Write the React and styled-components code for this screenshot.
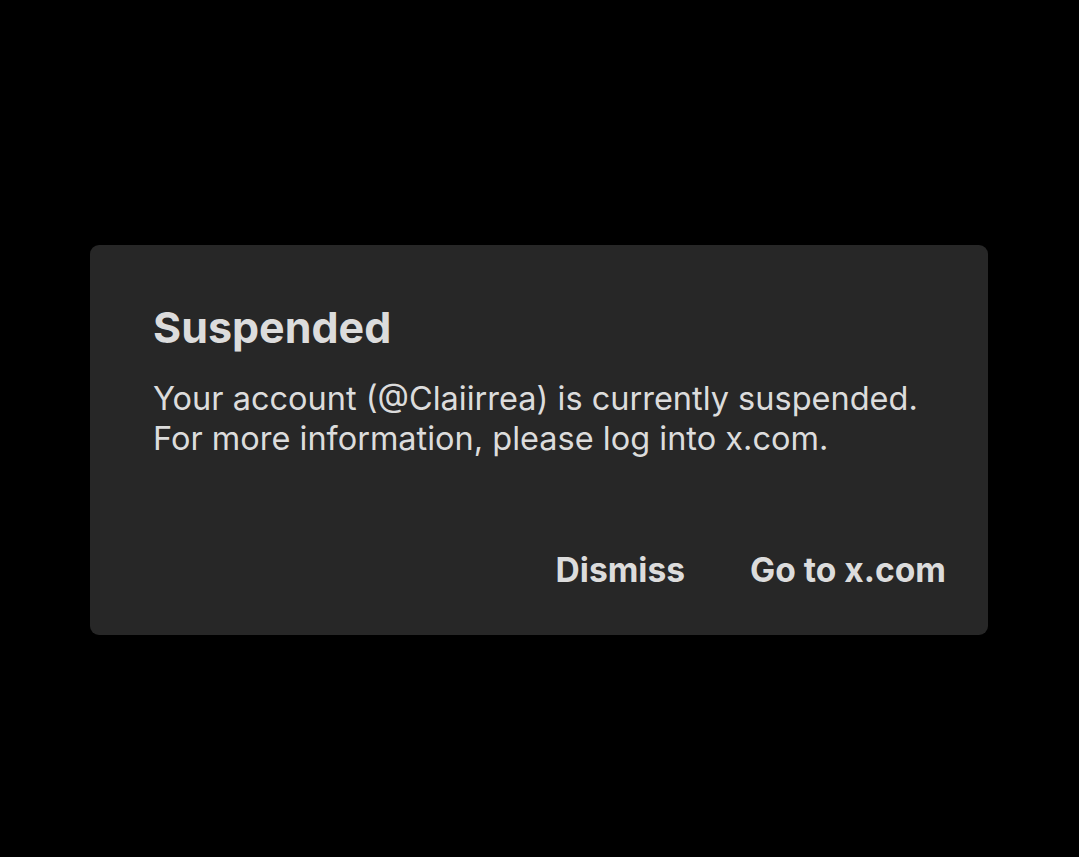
import React from "react";
import styled, { createGlobalStyle } from "styled-components";

const Global = createGlobalStyle`
  html, body { margin: 0; padding: 0; background: #000; }
  body { font-family: Inter, "Noto Sans", sans-serif; }
`;

const Screen = styled.div`
  width: 100%;
  height: 857px;
  background: #000;
  display: flex;
  justify-content: flex-start;
  align-items: flex-start;
  padding: 245px 0 0 90px;
  box-sizing: border-box;
`;

const Card = styled.div`
  width: 898px;
  height: 390px;
  box-sizing: border-box;
  background: #272727;
  border-radius: 9px;
  padding: 56px 42px 0 63px;
  display: flex;
  flex-direction: column;
  color: #dcdcdc;
`;

const Title = styled.h1`
  margin: 0;
  font-size: 43px;
  line-height: 52px;
  font-weight: 700;
  letter-spacing: 0;
`;

const Body = styled.p`
  margin: 26px 0 0;
  font-size: 32.5px;
  line-height: 40px;
  font-weight: 400;
`;

const Actions = styled.div`
  display: flex;
  justify-content: flex-end;
  gap: 65px;
  margin-top: 91px;
`;

const ActionButton = styled.button`
  background: none;
  border: none;
  padding: 0;
  color: #dcdcdc;
  font-family: inherit;
  font-size: 33.6px;
  line-height: 40px;
  font-weight: 700;
  cursor: pointer;
`;

export default function App() {
  return (
    <>
      <Global />
      <Screen>
        <Card>
          <Title>Suspended</Title>
          <Body>
            Your account (@Claiirrea) is currently suspended.
            <br />
            For more information, please log into x.com.
          </Body>
          <Actions>
            <ActionButton>Dismiss</ActionButton>
            <ActionButton>Go to x.com</ActionButton>
          </Actions>
        </Card>
      </Screen>
    </>
  );
}
